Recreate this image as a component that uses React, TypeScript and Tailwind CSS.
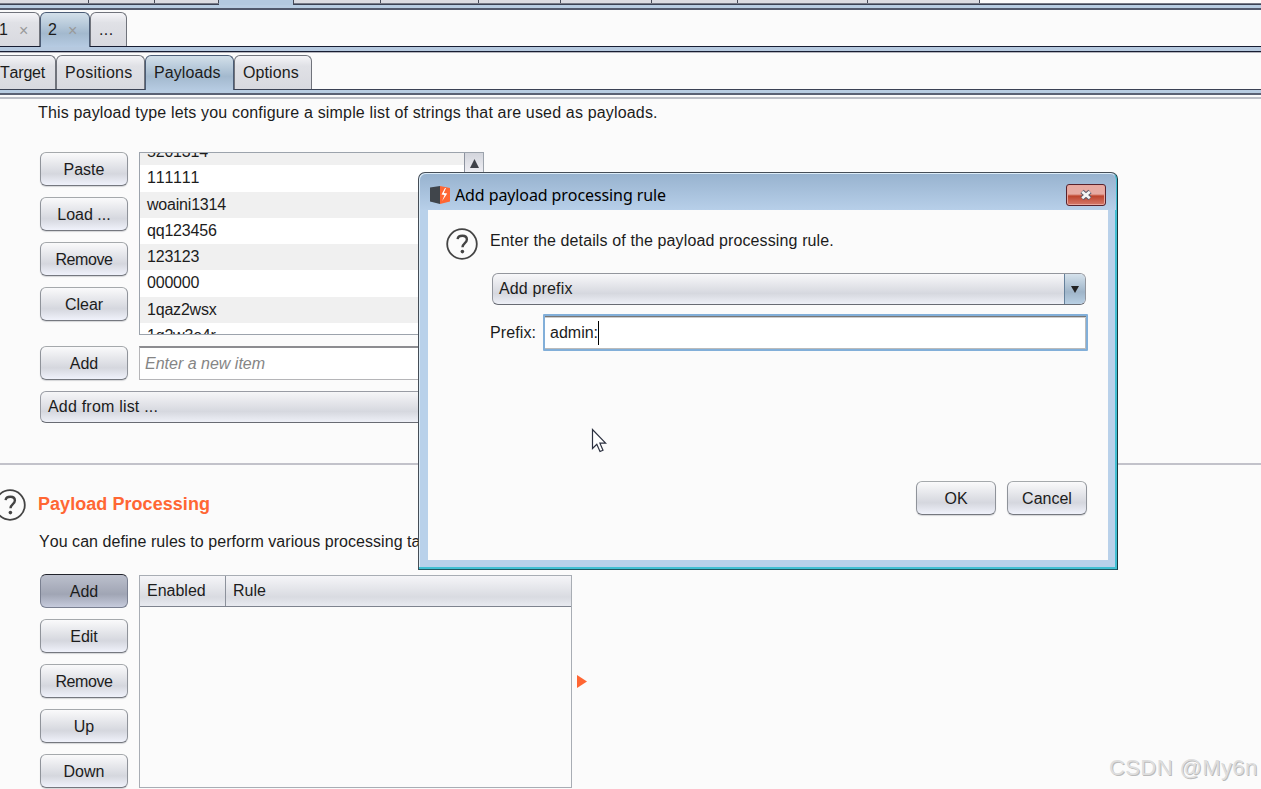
import type { ReactNode } from 'react';

const topTabs = [
  { id: 'a', width: 'w-[89px]' },
  { id: 'b', width: 'w-[66px]' },
  { id: 'c', width: 'w-[64px]' },
  { id: 'd', width: 'w-[75px]', active: true },
  { id: 'e', width: 'w-[87px]' },
  { id: 'f', width: 'w-[98px]' },
  { id: 'g', width: 'w-[82px]' },
  { id: 'h', width: 'w-[91px]' },
  { id: 'i', width: 'w-[86px]' },
  { id: 'j', width: 'w-[130px]' },
  { id: 'k', width: 'w-[112px]' },
];

const payloads = [
  '5201314',
  '111111',
  'woaini1314',
  'qq123456',
  '123123',
  '000000',
  '1qaz2wsx',
  '1q2w3e4r',
];

const HelpIcon = ({ className = '' }: { className?: string }) => (
  <svg viewBox="0 0 32 32" className={`size-8 shrink-0 ${className}`} fill="none" stroke="#444">
    <circle cx="16" cy="16" r="14.8" strokeWidth="1.8" />
    <path
      d="M11.6 11.2C11.9 8.8 14 7.8 16.4 7.8c2.7 0 4.5 1.4 4.5 3.8 0 3.4-4.4 3.6-4.4 7.6"
      strokeWidth="2.4"
    />
    <circle cx="16.4" cy="23.6" r="1.8" fill="#444" stroke="none" />
  </svg>
);

type ButtonProps = {
  children: ReactNode;
  width?: string;
  pressed?: boolean;
};

const Button = ({ children, width = 'w-[88px]', pressed = false }: ButtonProps) => (
  <button
    className={`flex h-[34px] shrink-0 items-center justify-center rounded-[6px] border-[1.5px] pt-px ${width} ${
      pressed
        ? 'border-[#7a8091] border-t-[#22242c] bg-linear-to-b from-[#bcc0cd] via-[#a0a5b4] via-60% to-[#c6cbdc]'
        : 'border-[#8f939a] border-t-[#a5a9ac] border-b-[#75787f] bg-linear-to-b from-[#fafafb] via-[#d5d7de] via-65% to-[#f0f2fb] shadow-[0_1px_1px_#d4d5d8]'
    }`}
  >
    {children}
  </button>
);

type TabProps = {
  children: ReactNode;
  width: string;
  active?: boolean;
  first?: boolean;
};

const Tab = ({ children, width, active = false, first = false }: TabProps) => (
  <div
    className={`flex shrink-0 items-center border-t-[1.5px] border-r-[1.5px] ${width} ${
      first ? 'rounded-tr-[6px]' : 'rounded-t-[6px] border-l-[1px]'
    } ${
      active
        ? 'relative z-10 -mb-px h-[35px] border-[#4b5c75] bg-linear-to-b from-[#d3e0ea] via-[#a3b9ce] via-60% to-[#b6cbe2] pb-px'
        : 'h-[34px] border-[#70737b] bg-linear-to-b from-[#f5f5f8] via-[#e0e1e6] via-30% to-[#d8d9df]'
    }`}
  >
    {children}
  </div>
);

const Close = () => <span className="ml-px pt-[2px] text-[16px] leading-none text-[#999]">×</span>;

const SectionButtons = ({ children }: { children: ReactNode }) => (
  <div className="flex flex-col gap-[11px]">{children}</div>
);

const Dialog = () => (
  <div className="absolute left-[418px] top-[172px] flex h-[398px] w-[700px] flex-col rounded-t-[7px] border-[1.5px] border-[#454d56] border-r-[#17383f] border-b-[#225963] bg-[#b9d1ea] shadow-[inset_-2px_-2px_0_#41bfd2,inset_1px_1px_0_#dcecf8]">
    {/* Title bar */}
    <div className="mx-px mt-px flex h-[36px] shrink-0 items-center rounded-t-[6px] bg-linear-to-b from-[#98b3cf] to-[#b7cfe9] pr-[10px] pl-[10px]">
      <svg viewBox="0 0 20 18" className="mt-[6px] h-[18px] w-[20px]">
        <path d="M0 1.5 10 0v18L0 15.5z" fill="#40454b" />
        <path d="m10 0 10 2v13.5L10 18z" fill="#ff6633" />
        <path d="m15 2-3.5 6.5 3 .5-2.3 6 5-7.5-3.4-.4L16 2z" fill="#fff" />
      </svg>
      <span className="ml-[5px] flex-1 pt-[6px] font-['Noto_Sans'] text-[16px] tracking-[-0.1px] text-black">
        Add payload processing rule
      </span>
      <button className="mt-[6px] flex h-[22px] w-[40px] items-center justify-center rounded-[3px] border-[1.5px] border-[#59232d] bg-linear-to-b from-[#e7aaa2] from-45% via-[#bd432c] via-55% to-[#d5796a] shadow-[inset_0_0_0_1px_#e8a69d]">
        <svg viewBox="0 0 14 12" className="h-[12px] w-[14px]">
          <path d="m3 2.5 8 7m0-7-8 7" stroke="#5c5968" strokeWidth="4.8" />
          <path d="m3.2 2.7 7.6 6.6m0-6.6-7.6 6.6" stroke="#f4f4f4" strokeWidth="2.8" />
        </svg>
      </button>
    </div>

    {/* Body */}
    <div className="mr-[9px] mb-[9px] ml-[9px] flex flex-1 flex-col bg-[#fbfbfb] px-[20px]">
      <div className="flex h-[63px] shrink-0">
        <HelpIcon className="-ml-[2px] mt-[18px]" />
        <p className="ml-[12px] mt-[21px] tracking-[0.12px]">
          Enter the details of the payload processing rule.
        </p>
      </div>

      <div className="ml-[44px] flex h-[32px] w-[594px] shrink-0 overflow-hidden rounded-[6px] border-[1.5px] border-[#93969d] border-b-[#686b73] bg-linear-to-b from-[#f8f8fa] via-[#d6d8df] via-65% to-[#eef0f7]">
        <span className="flex flex-1 items-center pl-[6px] tracking-[0.15px]">Add prefix</span>
        <span className="flex w-[21px] items-center justify-center border-l border-[#66819b] bg-linear-to-b from-[#d5e2ec] via-[#9fb5c9] via-60% to-[#b9d0e4]">
          <svg viewBox="0 0 8 7" className="h-[7px] w-[8px]">
            <path d="M0 0h8L4 7z" fill="#222" />
          </svg>
        </span>
      </div>

      <div className="mt-[9px] ml-[42px] flex h-[37px] shrink-0 items-center">
        <span className="w-[53px] tracking-[0.1px]">Prefix:</span>
        <div className="flex h-[37px] w-[545px] items-center rounded-[1px] border-[2px] border-[#82afd9] bg-white pl-[5px] shadow-[inset_0_1px_0_#777,inset_0_2px_0_#ccc,inset_-1px_-1px_0_#bbb]">
          admin:
          <span className="h-[24px] w-px bg-black" />
        </div>
      </div>

      <div className="mt-[130px] mr-[1px] flex justify-end gap-[11px]">
        <Button width="w-[80px]">OK</Button>
        <Button width="w-[80px]">Cancel</Button>
      </div>
    </div>
  </div>
);

const App = () => {
  return (
    <div className="relative flex h-[789px] w-[1261px] flex-col overflow-hidden bg-[#fbfbfb] font-['Liberation_Sans',sans-serif] text-[16px] leading-[20px] text-[#1c1c1c] [font-kerning:none]">
      {/* Main tabs, only their lower edge is in view */}
      <div className="flex h-[4px] shrink-0 border-b border-[#777b87]">
        {topTabs.map((tab) => (
          <div
            key={tab.id}
            className={`shrink-0 border-r-[1.5px] border-[#454956] ${tab.width} ${
              tab.active ? 'relative -mb-[2px] h-[5px] bg-[#b3c9df]' : 'h-[3px] bg-[#dbdce2]'
            }`}
          />
        ))}
      </div>
      <div className="h-[6px] shrink-0 border-t border-b-2 border-t-[#3b4254] border-b-[#51596c] bg-[#b8cde2]" />

      {/* Attack tabs */}
      <div className="flex h-[36px] shrink-0 items-end">
        <Tab width="w-[40px]" first>
          <span className="-ml-px w-[19px]">1</span>
          <Close />
        </Tab>
        <Tab width="w-[50px]" active>
          <span className="ml-[7px] w-[19px]">2</span>
          <Close />
        </Tab>
        <Tab width="w-[37px]">
          <span className="ml-[8px] tracking-[0.4px]">...</span>
        </Tab>
      </div>
      <div className="h-[6px] shrink-0 border-y border-[#171d32] bg-[#b6c9df]" />

      {/* Configuration tabs */}
      <div className="flex h-[37px] shrink-0 items-end border-t border-[#b5b5bd]">
        <Tab width="w-[56px]" first>
          <span className="tracking-[-0.2px]">Target</span>
        </Tab>
        <Tab width="w-[89px]">
          <span className="ml-[8px] tracking-[0.3px]">Positions</span>
        </Tab>
        <Tab width="w-[89px]" active>
          <span className="ml-[8px] tracking-[0.1px]">Payloads</span>
        </Tab>
        <Tab width="w-[78px]">
          <span className="ml-[8px] tracking-[0.1px]">Options</span>
        </Tab>
      </div>
      <div className="h-[6px] shrink-0 border-t border-b-2 border-t-[#3b4254] border-b-[#5a6274] bg-[#b8cde2]" />
      <div className="mt-[2px] h-[2px] shrink-0 bg-[#bdc0c7]" />

      {/* Payload options */}
      <p className="mt-[4px] ml-[38px] h-[20px] shrink-0 whitespace-nowrap tracking-[0.17px]">
        This payload type lets you configure a simple list of strings that are used as payloads.
      </p>
      <div className="mt-[29px] ml-[40px] flex h-[183px] shrink-0 gap-[11px]">
        <SectionButtons>
          <Button>Paste</Button>
          <Button>Load ...</Button>
          <Button>
            <span className="tracking-[-0.4px]">Remove</span>
          </Button>
          <Button>Clear</Button>
        </SectionButtons>
        <div className="flex h-[183px] w-[345px] overflow-hidden border border-[#9ca3ac]">
          <ul className="-mt-[14px] flex-1">
            {payloads.map((payload) => (
              <li
                key={payload}
                className="flex h-[26.25px] items-center bg-white pl-[7px] tracking-[-0.2px] odd:bg-[#f0f0f0]"
              >
                {payload}
              </li>
            ))}
          </ul>
          <div className="w-[19px] border-l-[1.5px] border-[#8d939f] bg-[#e4e5ea]">
            <div className="flex h-[21px] items-center justify-center bg-linear-to-b from-[#d3d5dc] to-[#f1f1f6]">
              <svg viewBox="0 0 8 8" className="size-[9px]">
                <path d="m4 0 4 8H0z" fill="#3f4249" />
              </svg>
            </div>
          </div>
        </div>
      </div>

      <div className="mt-[11px] ml-[40px] flex shrink-0 gap-[11px]">
        <Button>Add</Button>
        <div className="flex h-[34px] w-[345px] items-center border border-[#b5b5b8] border-t-2 border-t-[#8c8c90] bg-white pl-[5px] text-[#858585] italic">
          Enter a new item
        </div>
      </div>
      <div className="mt-[11px] ml-[40px] flex h-[32px] w-[445px] shrink-0 items-center rounded-[6px] border-[1.5px] border-[#999ca4] border-b-[#686b73] bg-linear-to-b from-[#f6f6f8] via-[#d6d8df] via-65% to-[#eef0f7] pl-[7px] tracking-[0.2px]">
        Add from list ...
      </div>

      {/* Payload processing */}
      <div className="mt-[40px] h-[2px] shrink-0 bg-[#c2c2ca]" />
      <div className="mt-[24px] flex h-[32px] shrink-0 items-center">
        <HelpIcon className="-ml-[6px]" />
        <h2 className="ml-[12px] pb-[2px] text-[18px] font-bold tracking-[0.05px] text-[#ff6633]">
          Payload Processing
        </h2>
      </div>
      <p className="mt-[11px] ml-[39px] h-[20px] shrink-0 whitespace-nowrap tracking-[0.05px]">
        You can define rules to perform various processing tasks on each payload before it is used.
      </p>
      <div className="mt-[22px] ml-[40px] flex shrink-0 items-start">
        <SectionButtons>
          <Button pressed>Add</Button>
          <Button>Edit</Button>
          <Button>
            <span className="tracking-[-0.4px]">Remove</span>
          </Button>
          <Button>Up</Button>
          <Button>Down</Button>
        </SectionButtons>
        <div className="mt-px ml-[11px] h-[213px] w-[433px] border-[1.5px] border-[#a8adb4]">
          <div className="flex h-[31px] border-b border-[#7e838e] bg-linear-to-b from-[#f5f5f8] via-[#d9dbe1] via-70% to-[#e8eaf0]">
            <span className="flex w-[86px] items-center border-r border-[#8c919b] pl-[7px]">
              Enabled
            </span>
            <span className="flex items-center pl-[7px]">Rule</span>
          </div>
        </div>
        <svg viewBox="0 0 10 13" className="mt-[101px] ml-[5px] h-[13px] w-[10px]">
          <path d="M0 0v13l10-6.5z" fill="#ff6633" />
        </svg>
      </div>

      <Dialog />

      {/* Mouse pointer */}
      <svg viewBox="0 0 16 25" className="absolute left-[591px] top-[428px] h-[25px] w-[16px]">
        <path
          d="M1.5 1.5v19l4.3-4.2 3.2 7.2 3-1.3-3.1-7h5.7z"
          fill="#fff"
          stroke="#2c3140"
          strokeWidth="1.2"
        />
      </svg>

      {/* Watermark */}
      <span className="absolute left-[1109px] top-[755px] text-[22px] leading-[26px] tracking-[0.4px] whitespace-nowrap text-[#dedede] [text-shadow:1px_1px_0_#bbb]">
        CSDN @My6n
      </span>
    </div>
  );
};

export default App;
